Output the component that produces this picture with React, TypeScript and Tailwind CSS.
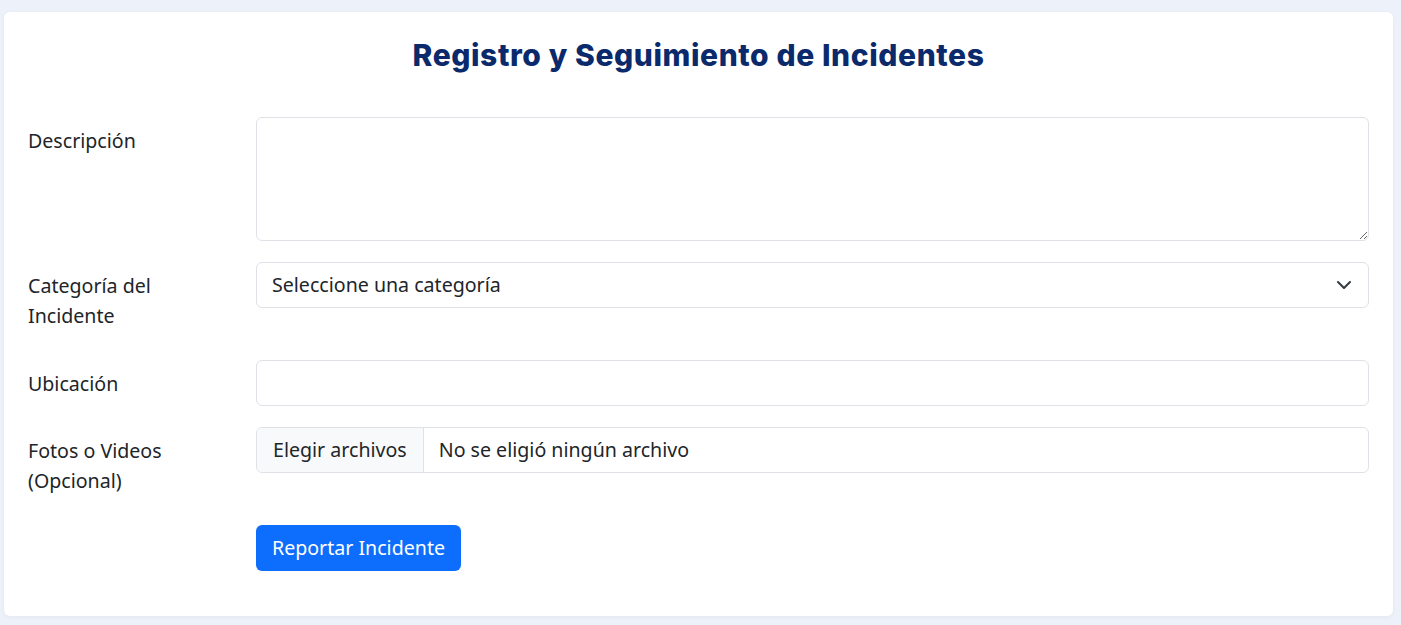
import React from "react";

export default function App() {
  return (
    <div
      className="min-h-[625px] w-full bg-[#edf1f9] pt-[12px] pl-[4px] pr-[8px] pb-[8px]"
      style={{ fontFamily: '"Noto Sans", "Open Sans", sans-serif' }}
    >
      <div className="w-[1389px] rounded-[6px] bg-white px-[24px] pt-[24px] pb-[45px] shadow-[0_1px_4px_rgba(30,60,120,0.06)]">
        <h1
          className="text-center text-[30px] leading-[38px] font-extrabold text-[#0b2a6b] tracking-[0.6px] mb-[43px]"
          style={{ fontFamily: 'Inter, "Noto Sans", sans-serif' }}
        >
          Registro y Seguimiento de Incidentes
        </h1>
        <div className="grid grid-cols-[216px_1fr] gap-x-[12px] gap-y-[21px] text-[19.6px] leading-[30px] text-[#212529]">
          <label className="pt-[9px] pb-[7px]">Descripción</label>
          <textarea className="h-[124px] w-full rounded-[6px] border border-[#dee2e6] px-[15px] py-[7px] outline-none" />

          <label className="pt-[9px] pb-[8px]">
            Categoría del
            <br />
            Incidente
          </label>
          <div className="flex h-[46px] items-center justify-between rounded-[6px] border border-[#dee2e6] pl-[15px] pr-[16px]">
            <span>Seleccione una categoría</span>
            <svg width="16" height="16" viewBox="0 0 16 16" fill="none">
              <path d="m2 5 6 6 6-6" stroke="#343a40" strokeWidth="2" strokeLinecap="round" strokeLinejoin="round" />
            </svg>
          </div>

          <label className="pt-[9px] pb-[7px]">Ubicación</label>
          <input className="h-[46px] w-full rounded-[6px] border border-[#dee2e6] px-[15px] outline-none" />

          <label className="pt-[9px] pb-[8px]">
            Fotos o Videos
            <br />
            (Opcional)
          </label>
          <div className="flex h-[46px] overflow-hidden rounded-[6px] border border-[#dee2e6]">
            <div className="flex items-center border-r border-[#dee2e6] bg-[#f8f9fa] px-[16px]">Elegir archivos</div>
            <div className="flex items-center px-[15px]">No se eligió ningún archivo</div>
          </div>

          <div />
          <div>
            <button className="h-[46px] w-[205px] rounded-[6px] bg-[#0d6efd] text-white">Reportar Incidente</button>
          </div>
        </div>
      </div>
    </div>
  );
}
